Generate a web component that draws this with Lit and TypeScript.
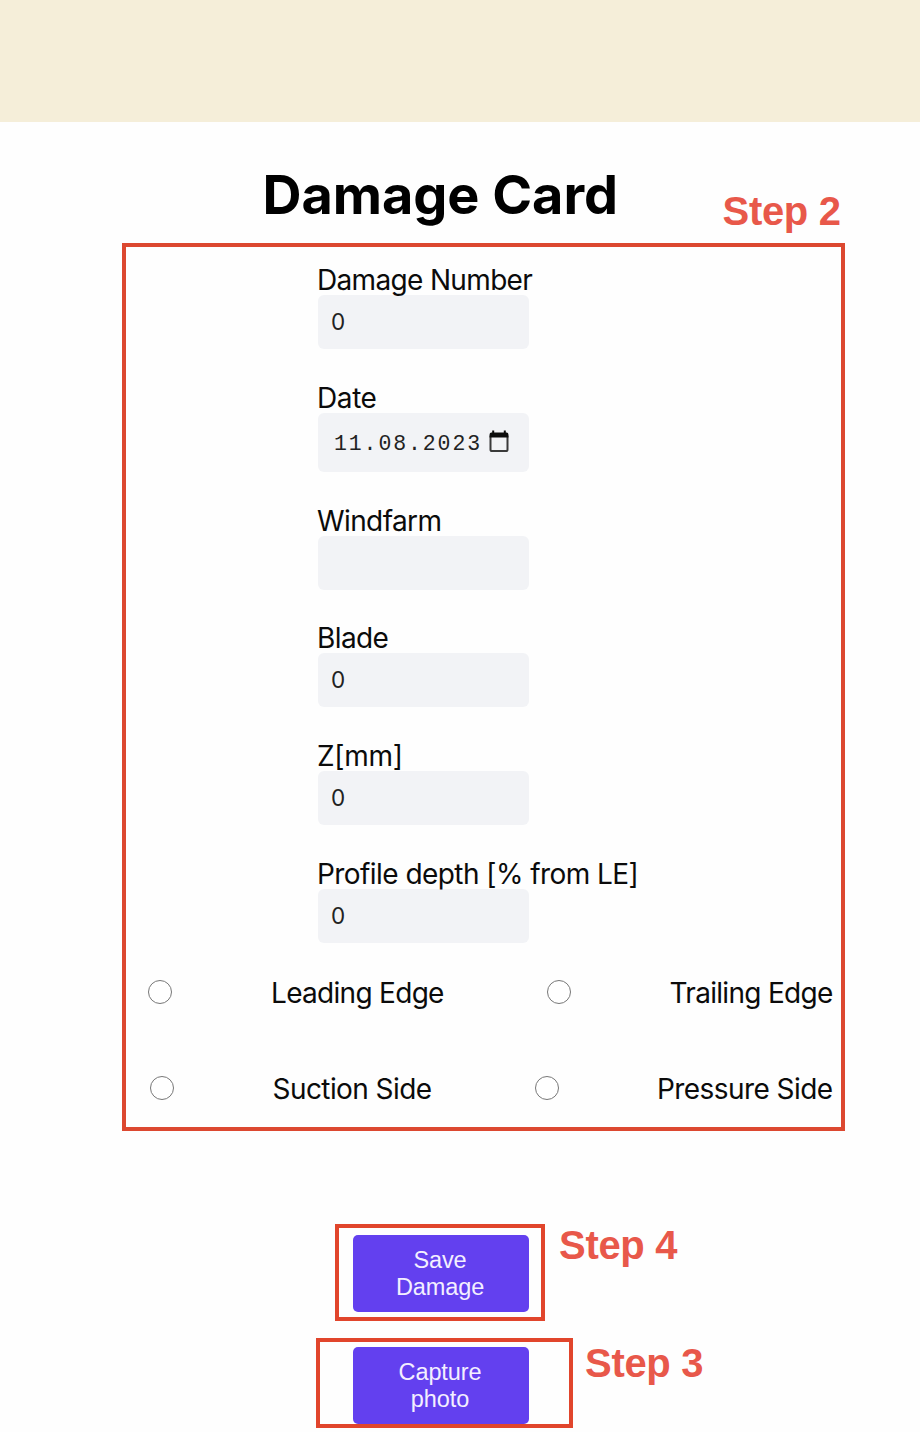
import { LitElement, html, css, svg } from "lit";
import { customElement } from "lit/decorators.js";

interface Field {
  label: string;
  value: string;
  cls: string;
}

const FIELDS: Field[] = [
  { label: "Damage Number", value: "0", cls: "l-number" },
  { label: "Date", value: "11.08.2023", cls: "l-date" },
  { label: "Windfarm", value: "", cls: "l-farm" },
  { label: "Blade", value: "0", cls: "l-blade" },
  { label: "Z[mm]", value: "0", cls: "l-z" },
  { label: "Profile depth [% from LE]", value: "0", cls: "l-depth" },
];

const calendar = svg`
  <path d="M2.5 5.5V19.4q0 1.6 1.6 1.6H17.9q1.6 0 1.6-1.6V5.5" fill="none" stroke="#3a3a3a" stroke-width="2"/>
  <path d="M1.6 7.4V4.2Q1.6 2.4 3.4 2.4H4.2V.6H6.2V2.4H15.8V.6H17.8V2.4H18.6Q20.4 2.4 20.4 4.2V7.4Z" fill="#0c0c0c"/>`;

@customElement("app-root")
export class AppRoot extends LitElement {
  static styles = css`
    :host {
      display: block;
      height: 1432px;
      overflow: hidden;
      background: #fefefe;
      color: #0b0b0b;
      font-family: Inter, "Liberation Sans", sans-serif;
    }
    * { box-sizing: border-box; }
    .banner { height: 122px; background: #f5eed9; }
    .head {
      display: flex;
      height: 121px;
      padding-left: 262.5px;
      align-items: flex-start;
    }
    h1 {
      margin: 40px 0 0;
      width: 460px;
      font-size: 54px;
      line-height: 66px;
      font-weight: 700;
      letter-spacing: -0.05px;
      color: #000;
      white-space: nowrap;
    }
    .step {
      font: 700 40px/46px "Liberation Sans", Arial, sans-serif;
      letter-spacing: -0.3px;
      color: #e8584a;
      white-space: nowrap;
    }
    .head .step { margin-top: 66px; }
    .panel {
      margin-left: 122px;
      width: 723px;
      height: 888px;
      border: 4px solid #dc4830;
      padding-top: 16px;
    }
    .field { margin: 0 0 31.75px 192px; width: 400px; }
    .label {
      height: 32px;
      margin-left: -1px;
      font-size: 28px;
      line-height: 34px;
      white-space: nowrap;
      letter-spacing: -0.6px;
    }
    .l-number { letter-spacing: -0.66px; }
    .l-date { letter-spacing: -0.4px; }
    .l-z { letter-spacing: -0.3px; }
    .l-depth { letter-spacing: -0.56px; }
    .input {
      display: flex;
      align-items: center;
      width: 211px;
      height: 54px;
      border-radius: 6px;
      background: #f2f3f6;
      padding: 0 0 1px 13px;
      font-size: 22.5px;
      letter-spacing: -0.5px;
      color: #222;
    }
    .input.date {
      height: 59px;
      padding: 4px 0 0 16px;
      font-family: "Liberation Mono", monospace;
      font-size: 21.5px;
      letter-spacing: 1.9px;
    }
    .cal { width: 22px; height: 23px; margin: -5px 0 0 6px; flex: none; }
    .radios {
      display: flex;
      align-items: center;
      height: 34px;
      font-size: 28px;
      line-height: 34px;
      white-space: nowrap;
    }
    .edge { padding-left: 22px; margin-top: 33px; letter-spacing: -0.7px; }
    .side { padding-left: 24px; margin-top: 62px; letter-spacing: -0.57px; }
    .dot {
      width: 24px;
      height: 24px;
      flex: none;
      border: 1.6px solid #777;
      border-radius: 50%;
      background: #fff;
      margin-top: -2px;
    }
    .name { margin-left: 99px; flex: none; }
    .side .name { margin-left: 98.5px; }
    .edge .first { width: 275.5px; }
    .side .first { width: 262px; }
    .action { display: flex; align-items: flex-start; }
    .frame { border: 4px solid #e1452c; flex: none; }
    .save { padding-left: 335px; margin-top: 93px; }
    .save .frame { width: 210px; height: 97px; padding: 7px 0 0 14px; }
    .capture { padding-left: 316px; margin-top: 17px; }
    .capture .frame { width: 257px; height: 90px; padding: 5px 0 0 33px; }
    .save .step { margin: -2px 0 0 14px; }
    .capture .step { margin: 2px 0 0 12px; }
    button {
      display: block;
      width: 176px;
      height: 77px;
      border: 0;
      border-radius: 5px;
      padding: 0 38px 0 36px;
      background: #6340ef;
      color: #f3efff;
      font: 400 23.5px/26.5px "Liberation Sans", Arial, sans-serif;
      letter-spacing: -0.1px;
      text-align: center;
    }
  `;

  private field(f: Field) {
    const isDate = f.label === "Date";
    return html`<div class="field">
      <div class="label ${f.cls}">${f.label}</div>
      <div class="input ${isDate ? "date" : ""}">
        <span>${f.value}</span>
        ${isDate ? html`<svg class="cal" viewBox="0 0 22 23">${calendar}</svg>` : ""}
      </div>
    </div>`;
  }

  private radios(cls: string, a: string, b: string) {
    return html`<div class="radios ${cls}">
      <span class="dot"></span><span class="name first">${a}</span>
      <span class="dot second"></span><span class="name last">${b}</span>
    </div>`;
  }

  render() {
    return html`
      <div class="banner"></div>
      <header class="head">
        <h1>Damage Card</h1>
        <span class="step">Step 2</span>
      </header>
      <section class="panel">
        ${FIELDS.map((f) => this.field(f))}
        ${this.radios("edge", "Leading Edge", "Trailing Edge")}
        ${this.radios("side", "Suction Side", "Pressure Side")}
      </section>
      <div class="action save">
        <div class="frame"><button>Save Damage</button></div>
        <span class="step">Step 4</span>
      </div>
      <div class="action capture">
        <div class="frame"><button>Capture photo</button></div>
        <span class="step">Step 3</span>
      </div>
    `;
  }
}
